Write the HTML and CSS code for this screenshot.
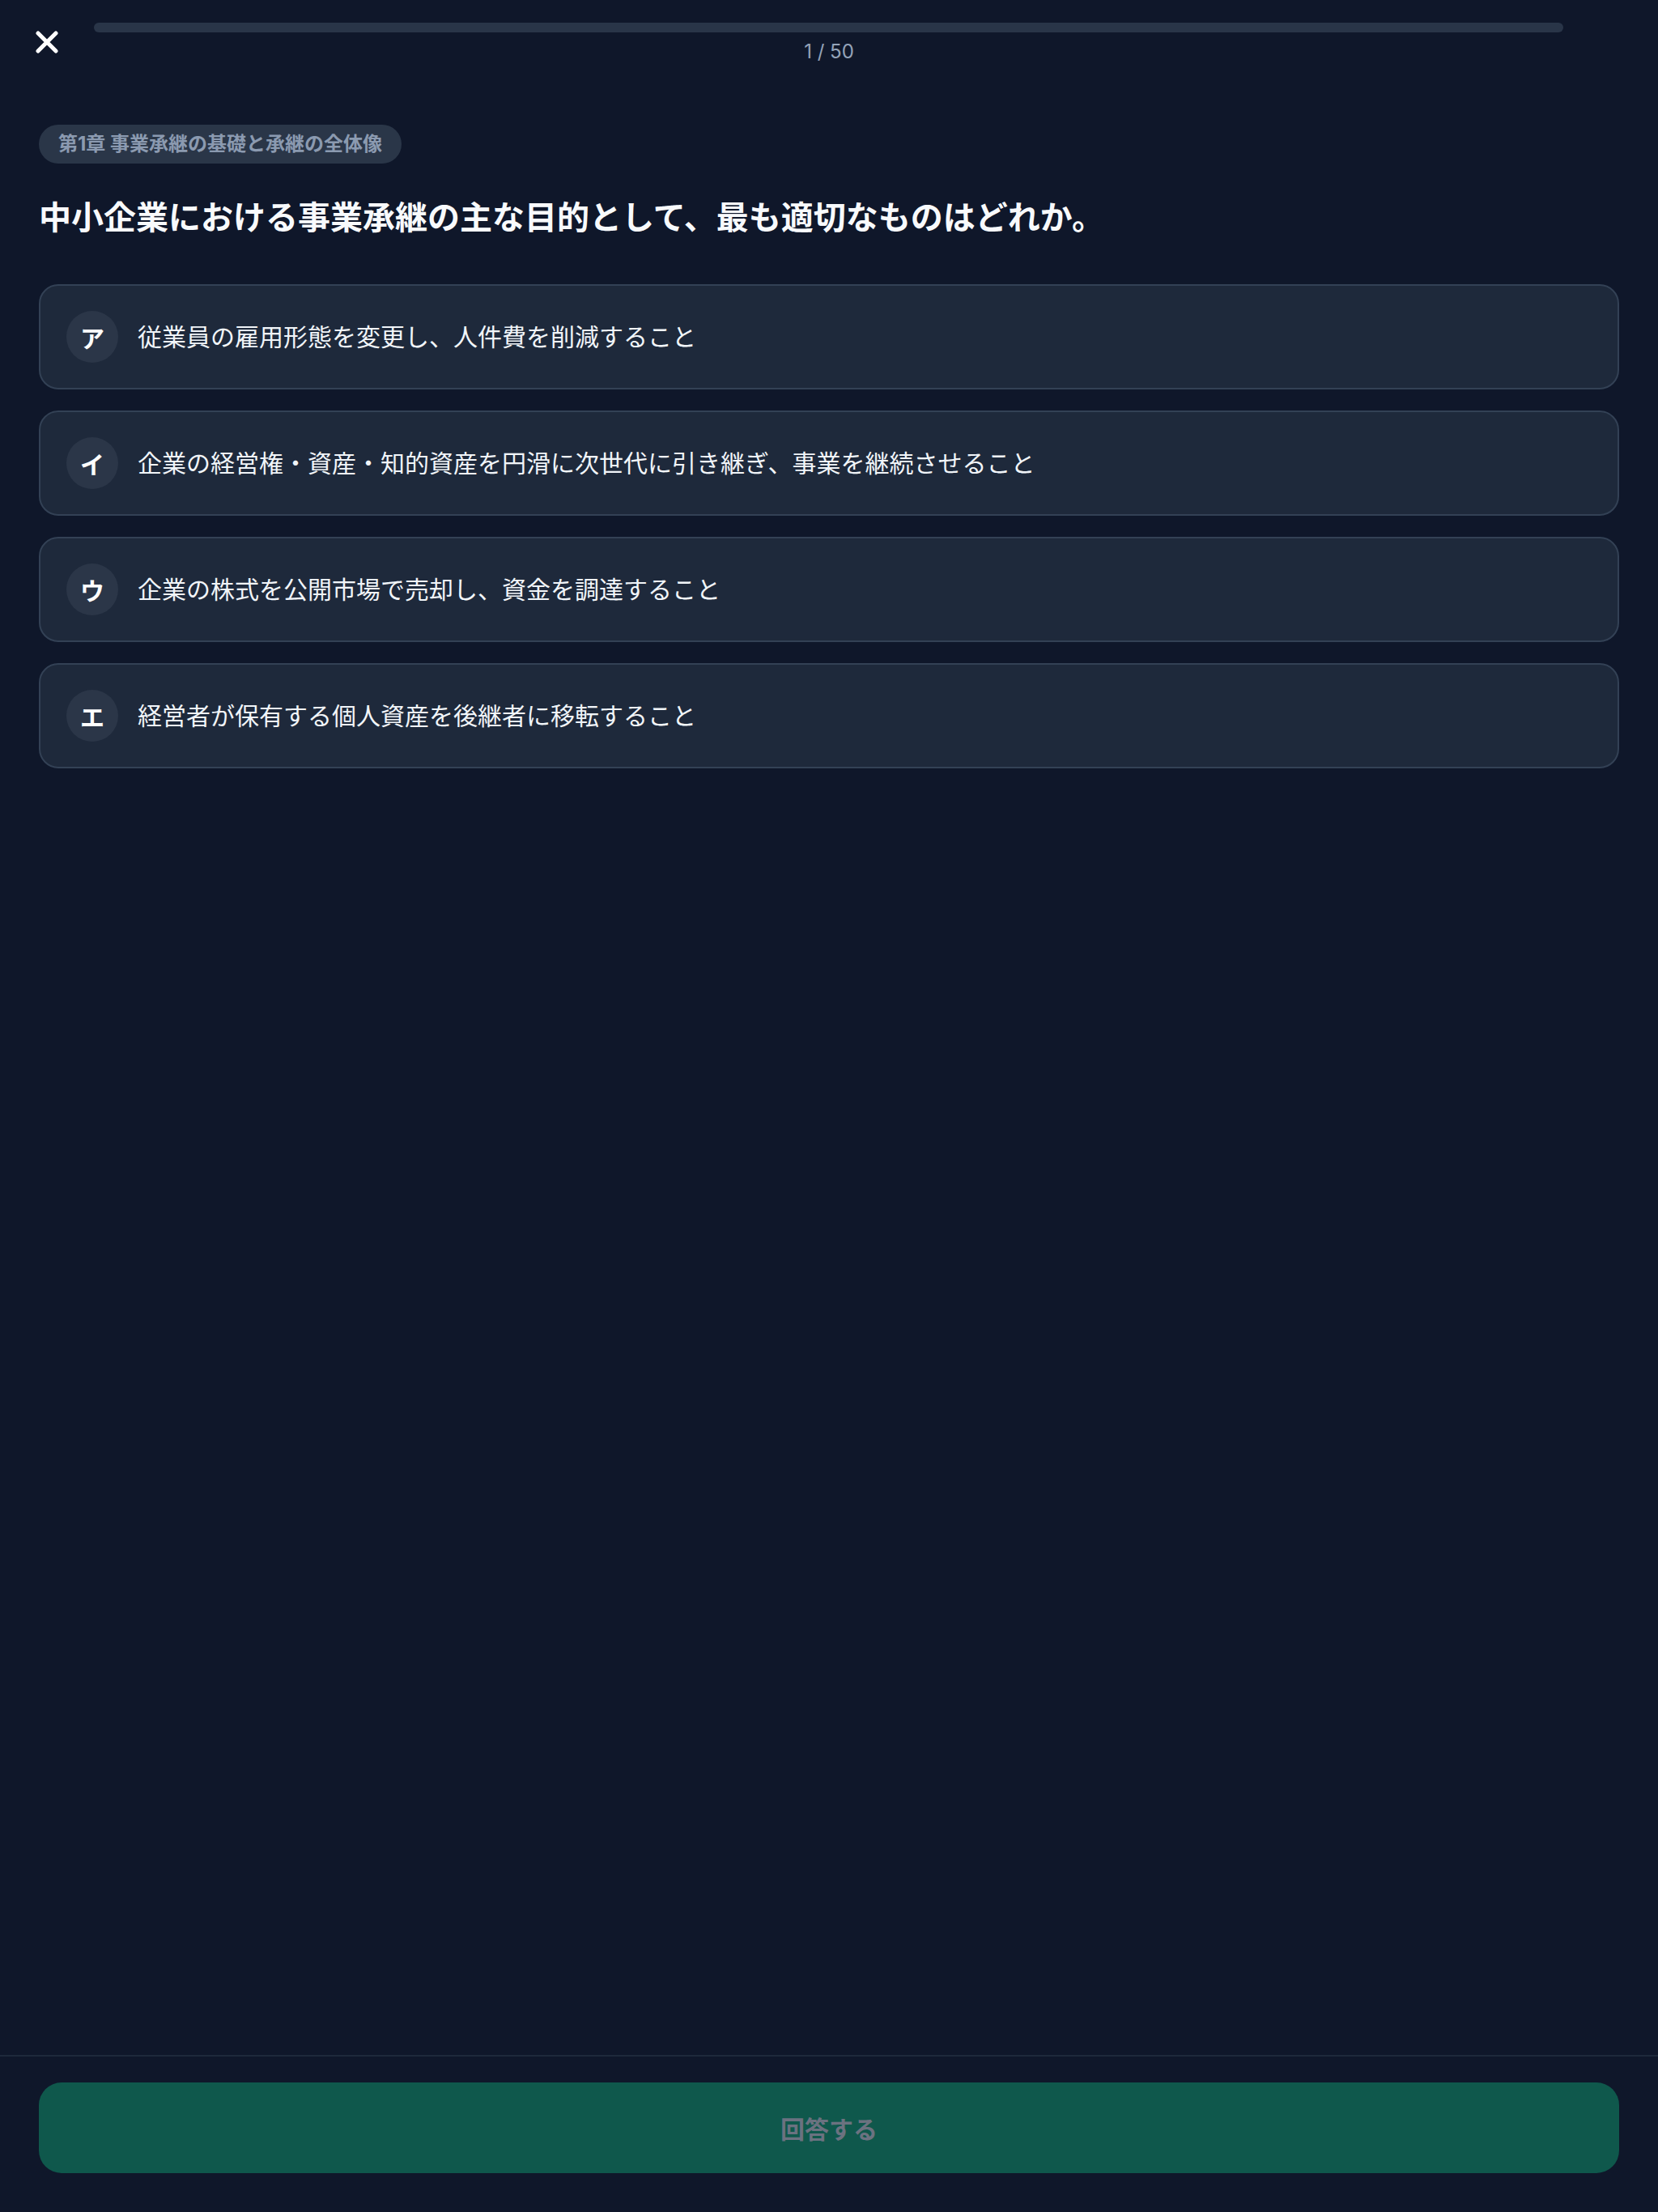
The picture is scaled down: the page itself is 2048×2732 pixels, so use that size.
FILE: index.html
```html
<!DOCTYPE html>
<html lang="ja">
<head>
<meta charset="utf-8">
<title>Quiz</title>
<link rel="stylesheet" href="styles.css">
</head>
<body>
<div class="screen">
  <header class="header">
    <button class="close" aria-label="閉じる">
      <svg viewBox="0 0 28 28" width="28" height="28" aria-hidden="true">
        <path d="M3 3 L25 25 M25 3 L3 25" stroke="#ffffff" stroke-width="5" stroke-linecap="round" fill="none"/>
      </svg>
    </button>
    <div class="progress"><div class="progress-fill" style="width:0%"></div></div>
    <div class="counter">1 / 50</div>
  </header>

  <main class="main">
    <div class="tag">第1章 事業承継の基礎と承継の全体像</div>
    <h1 class="question">中小企業における事業承継の主な目的として、最も適切なものはどれか。</h1>
    <ul class="options">
      <li class="option"><span class="badge">ア</span><span class="option-text">従業員の雇用形態を変更し、人件費を削減すること</span></li>
      <li class="option"><span class="badge">イ</span><span class="option-text">企業の経営権・資産・知的資産を円滑に次世代に引き継ぎ、事業を継続させること</span></li>
      <li class="option"><span class="badge">ウ</span><span class="option-text">企業の株式を公開市場で売却し、資金を調達すること</span></li>
      <li class="option"><span class="badge">エ</span><span class="option-text">経営者が保有する個人資産を後継者に移転すること</span></li>
    </ul>
  </main>

  <footer class="footer">
    <button class="submit" disabled>回答する</button>
  </footer>
</div>
</body>
</html>
```

FILE: styles.css
```css
* { box-sizing: border-box; }

html, body {
  margin: 0;
  padding: 0;
  background: #0f172a;
}

body {
  font-family: Inter, "Noto Sans CJK JP", "Noto Sans", sans-serif;
  color: #f8fafc;
}

.screen {
  min-height: 100vh;
  display: flex;
  flex-direction: column;
}

.header {
  display: grid;
  grid-template-columns: 116px 1fr 117px;
  grid-template-rows: 12px auto;
  padding-top: 28px;
}

.close {
  grid-column: 1;
  grid-row: 1 / 3;
  align-self: center;
  justify-self: center;
  width: 28px;
  height: 28px;
  padding: 0;
  border: 0;
  background: transparent;
  display: flex;
  align-items: center;
  justify-content: center;
  margin-top: -2px;
}

.close svg { display: block; }

.progress {
  grid-column: 2;
  grid-row: 1;
  height: 12px;
  border-radius: 6px;
  background: #293548;
  overflow: hidden;
}

.progress-fill {
  height: 100%;
  background: #10b981;
}

.counter {
  grid-column: 1 / -1;
  grid-row: 2;
  margin-top: 10px;
  text-align: center;
  font-size: 24px;
  line-height: 28px;
  color: #94a3b8;
}

.main {
  flex: 1;
  padding: 76px 48px 0;
}

.tag {
  display: inline-block;
  height: 48px;
  padding: 8px 24px;
  border-radius: 24px;
  background: #2a3648;
  color: #8b9ab0;
  font-size: 24px;
  line-height: 32px;
  font-weight: 700;
}

.question {
  margin: 37px 0 52px;
  font-size: 40px;
  line-height: 60px;
  font-weight: 700;
  color: #f8fafc;
}

.options {
  list-style: none;
  margin: 0;
  padding: 0;
  display: flex;
  flex-direction: column;
  gap: 26px;
}

.option {
  display: flex;
  align-items: center;
  gap: 24px;
  padding: 31px 32px;
  background: #1e293b;
  border: 2px solid #334155;
  border-radius: 24px;
}

.badge {
  flex: none;
  width: 64px;
  height: 64px;
  border-radius: 50%;
  background: #2b3648;
  display: flex;
  align-items: center;
  justify-content: center;
  font-size: 30px;
  font-weight: 700;
  color: #ffffff;
}

.option-text {
  font-size: 30px;
  line-height: 44px;
  color: #f1f5f9;
}

.footer {
  border-top: 2px solid #1e293b;
  padding: 32px 48px 48px;
}

.submit {
  display: block;
  width: 100%;
  height: 112px;
  border: 0;
  border-radius: 28px;
  background: #0f584c;
  color: #6b7280;
  font-family: Inter, "Noto Sans CJK JP", sans-serif;
  font-size: 30px;
  font-weight: 700;
}
```
